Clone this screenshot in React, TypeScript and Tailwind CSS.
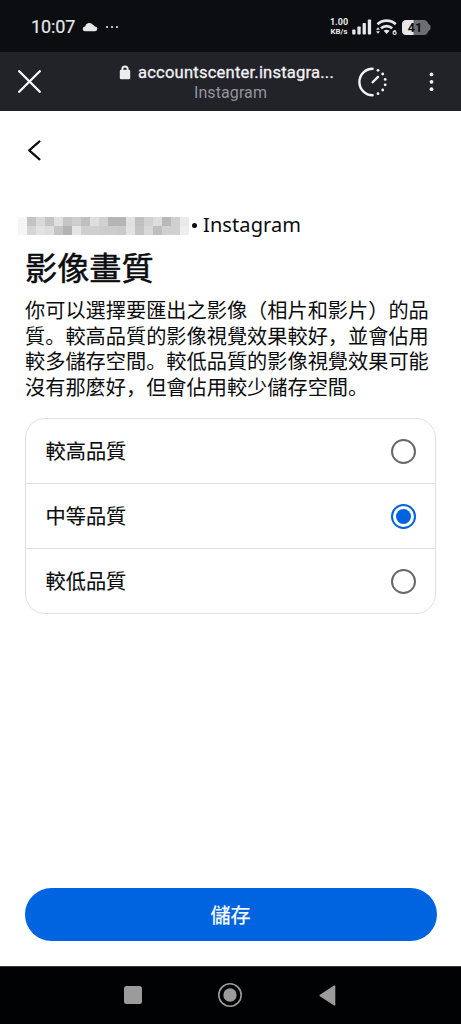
import { useState } from 'react'

const QUALITY_OPTIONS = [
  { value: 'high', label: '較高品質' },
  { value: 'medium', label: '中等品質' },
  { value: 'low', label: '較低品質' },
]

const DESCRIPTION = [
  '你可以選擇要匯出之影像（相片和影片）的品',
  '質。較高品質的影像視覺效果較好，並會佔用',
  '較多儲存空間。較低品質的影像視覺效果可能',
  '沒有那麼好，但會佔用較少儲存空間。',
].join('\n')

// grey levels of the censored account name, row by row
const MOSAIC = [
  [245, 195, 217, 197, 224, 197, 206, 191, 222, 209, 181, 181, 225, 192, 209, 221, 184, 208, 234],
  [245, 213, 226, 222, 196, 179, 229, 207, 207, 204, 204, 202, 226, 196, 216, 190, 208, 208, 238],
]

function StatusBar() {
  return (
    <div className="h-[52px] shrink-0 bg-[#0b0d11] flex items-center justify-between pl-[31px] pr-[30px] pt-[2px] text-[#e6e7e9]">
      <div className="flex items-center">
        <span className="w-[45px] whitespace-nowrap font-['Roboto',sans-serif] text-[18px] leading-none font-normal tracking-[-0.1px] [-webkit-text-stroke:0.2px]">10:07</span>
        <svg width="16" height="10" viewBox="0 0 15 10" className="ml-[6px]">
          <path d="M2.6 9.3a2.3 2.3 0 0 1 0-4.7A4.3 4.3 0 0 1 10.4 2.8a3.2 3.2 0 0 1 1.9 1.7 2.4 2.4 0 0 1 .2 4.8z" fill="currentColor" />
        </svg>
        <svg width="15" height="4" viewBox="0 0 15 4" className="ml-[7px]" fill="currentColor">
          <circle cx="2" cy="2" r="1.1" />
          <circle cx="7" cy="2" r="1.1" />
          <circle cx="12" cy="2" r="1.1" />
        </svg>
      </div>

      <div className="flex items-center">
        <div className="flex flex-col items-center w-[18px] font-['Roboto',sans-serif] font-bold text-[7.8px] leading-[10.5px] whitespace-nowrap">
          <span className="text-[9px]">1.00</span>
          <span>KB/s</span>
        </div>
        <svg width="20" height="16" viewBox="0 0 20 16" className="ml-[4px]" fill="currentColor">
          <rect x="0.2" y="10.5" width="3.3" height="5" rx="0.8" />
          <rect x="5.4" y="7.5" width="3.3" height="8" rx="0.8" />
          <rect x="10.6" y="4" width="3.3" height="11.5" rx="0.8" />
          <rect x="15.8" y="0.5" width="3.3" height="15" rx="0.8" />
        </svg>
        <svg width="22" height="18" viewBox="0 0 22 18" className="ml-[4px]">
          <path d="M1.5 6.3a13.2 13.2 0 0 1 18.2 0" fill="none" stroke="currentColor" strokeWidth="2.7" />
          <path d="M5 10.3a8.3 8.3 0 0 1 11.2 0" fill="none" stroke="currentColor" strokeWidth="2.6" />
          <path d="M7.6 12.7q3-2.1 6 0l-3 3.3z" fill="currentColor" />
          <path d="M0 11.7 2 9.2l2 2.5zM0 13.3h4L2 15.8z" fill="currentColor" />
          <text x="16.3" y="17" fontSize="8" fontWeight="700" fontFamily="Roboto, sans-serif" fill="currentColor">6</text>
        </svg>
        <div className="relative ml-[4px] w-[29px] h-[15px]">
          <svg width="29" height="15" viewBox="0 0 29 15">
            <path d="M4.5 0H22q3 0 4.2 3.5l2.3 2.3v3.4l-2.3 2.3Q25 15 22 15H4.5Q0 15 0 10.5v-6Q0 0 4.5 0z" fill="#6c6d70" />
            <path d="M4.5 0H11.5V15H4.5Q0 15 0 10.5v-6Q0 0 4.5 0z" fill="#e6e7e9" />
          </svg>
          <span className="absolute inset-0 pr-[3px] text-center font-['Roboto',sans-serif] font-bold text-[12.5px] leading-[16px] text-[#0b0d11]">41</span>
        </div>
      </div>
    </div>
  )
}

function BrowserBar() {
  return (
    <div className="h-[59px] shrink-0 bg-[#222329] flex items-center pl-[18px]">
      <svg width="23" height="23" viewBox="0 0 23 23" className="shrink-0">
        <path d="M1.2 1.2 21.8 21.8M21.8 1.2 1.2 21.8" stroke="#f7f7f8" strokeWidth="2.3" strokeLinecap="round" />
      </svg>

      <div className="ml-[78px] w-[216px] shrink-0 flex flex-col items-center pt-[1px]">
        <div className="flex items-center h-[21px]">
          <svg width="12" height="15" viewBox="0 0 12 15" className="shrink-0 mr-[7px]">
            <path d="M3.3 6.5V4.2a2.7 2.7 0 0 1 5.4 0v2.3" fill="none" stroke="#ececee" strokeWidth="1.9" />
            <rect x="0.8" y="4.8" width="10.4" height="9.4" rx="1.3" fill="#ececee" />
          </svg>
          <span className="w-[197px] whitespace-nowrap font-['Roboto',sans-serif] text-[16.6px] leading-[21px] font-normal tracking-[0.19px] text-[#f1f1f3] [-webkit-text-stroke:0.3px]">accountscenter.instagra...</span>
        </div>
        <span className="ml-[7px] font-['Roboto',sans-serif] text-[16px] leading-[20px] tracking-[0.1px] text-[#93949d]">Instagram</span>
      </div>

      <svg width="30" height="30" viewBox="0 0 30 30" className="ml-[23px] shrink-0">
        <path d="M14.6 1.8a13.2 13.2 0 0 0 0 26.4" fill="none" stroke="#f4f4f5" strokeWidth="2.4" strokeLinecap="round" />
        <path d="M14.6 15.3 20 9.9" stroke="#f4f4f5" strokeWidth="2.3" strokeLinecap="round" />
        <g fill="#f4f4f5">
          <circle cx="20" cy="3.3" r="1.4" />
          <circle cx="24.7" cy="7" r="1.4" />
          <circle cx="27.2" cy="12.4" r="1.4" />
          <circle cx="27.2" cy="17.8" r="1.4" />
          <circle cx="24.7" cy="23" r="1.4" />
          <circle cx="20" cy="26.7" r="1.4" />
        </g>
      </svg>
      <svg width="6" height="20" viewBox="0 0 6 20" className="ml-[40px] shrink-0" fill="#f4f4f5">
        <circle cx="3.5" cy="2.4" r="1.9" />
        <circle cx="3.5" cy="9.8" r="1.9" />
        <circle cx="3.5" cy="17.2" r="1.9" />
      </svg>
    </div>
  )
}

function NavBar() {
  return (
    <div className="h-[58px] shrink-0 bg-[#010204] border-t border-[#3a3a3c] flex items-center justify-center pr-[2px] pb-[1px]">
      <svg width="18" height="18" viewBox="0 0 18 18">
        <rect width="18" height="18" rx="2.5" fill="#9b9b9b" />
      </svg>
      <svg width="24" height="24" viewBox="0 0 24 24" className="ml-[76px]">
        <circle cx="12" cy="12" r="11.2" fill="none" stroke="#9b9b9b" strokeWidth="1.6" />
        <circle cx="12" cy="12" r="6.7" fill="#9b9b9b" />
      </svg>
      <svg width="17" height="21" viewBox="0 0 17 21" className="ml-[77px]">
        <path d="M15.5 1.2v18.6L1.3 10.5z" fill="#9b9b9b" stroke="#9b9b9b" strokeWidth="1.6" strokeLinejoin="round" />
      </svg>
    </div>
  )
}

export default function App() {
  const [quality, setQuality] = useState('medium')

  return (
    <div className="w-[461px] h-[1024px] flex flex-col overflow-hidden bg-white text-[#0b0c0e] font-['Noto_Sans_CJK_SC',sans-serif]">
      <StatusBar />
      <BrowserBar />

      <main className="flex-1 flex flex-col px-[25px] pt-[28px]">
        <button className="ml-[2px] w-[15px] h-[22px]" aria-label="返回">
          <svg width="15" height="22" viewBox="0 0 15 22">
            <path d="M12.5 2.4 2.2 11.4l10.3 9" fill="none" stroke="#0b0c0e" strokeWidth="2.2" strokeLinecap="round" strokeLinejoin="round" />
          </svg>
        </button>

        <div className="-ml-[7px] mt-[45px] h-[38px] flex items-center">
          <div className="mt-[2px] grid grid-cols-[repeat(19,9px)] auto-rows-[9px]">
            {MOSAIC.flat().map((level, i) => (
              <span key={i} style={{ backgroundColor: `rgb(${level} ${level} ${level})` }} />
            ))}
          </div>
          <span className="ml-[3px] size-[5px] rounded-full bg-[#0b0c0e]" />
          <span className="ml-[6px] whitespace-nowrap font-['Noto_Sans',sans-serif] text-[20px] leading-[26px] tracking-[0.1px]">Instagram</span>
        </div>

        <h1 className="mt-[2px] text-[32.2px] leading-[40px] font-normal [-webkit-text-stroke:0.5px]">影像畫質</h1>

        <p className="mt-[11px] text-[20.2px] leading-[25.7px] whitespace-pre">{DESCRIPTION}</p>

        <div className="mt-[18px] w-[411.5px] -ml-[0.5px] shrink-0 rounded-[20px] border border-[#dedfe2] divide-y divide-[#dedfe2] overflow-hidden">
          {QUALITY_OPTIONS.map((option) => (
            <label key={option.value} className="h-[65px] last:h-[64px] flex items-center justify-between pl-[20px] pr-[19px]">
              <span className="text-[20.2px] leading-[26px] [-webkit-text-stroke:0.15px]">{option.label}</span>
              <input
                type="radio"
                name="quality"
                className="sr-only"
                checked={quality === option.value}
                onChange={() => setQuality(option.value)}
              />
              {quality === option.value ? (
                <span className="mt-[1px] size-[25px] rounded-full border-2 border-[#0064e0] flex items-center justify-center">
                  <span className="size-[15px] rounded-full bg-[#0064e0]" />
                </span>
              ) : (
                <span className="mt-[1px] size-[25px] rounded-full border-2 border-[#65686c]" />
              )}
            </label>
          ))}
        </div>

        <button className="mt-auto mb-[24.7px] -ml-[0.5px] w-[412px] h-[53.6px] shrink-0 rounded-full bg-[#0064e0] text-white text-[20px] leading-[26px] font-normal [-webkit-text-stroke:0.25px]">
          儲存
        </button>
      </main>

      <NavBar />
    </div>
  )
}
